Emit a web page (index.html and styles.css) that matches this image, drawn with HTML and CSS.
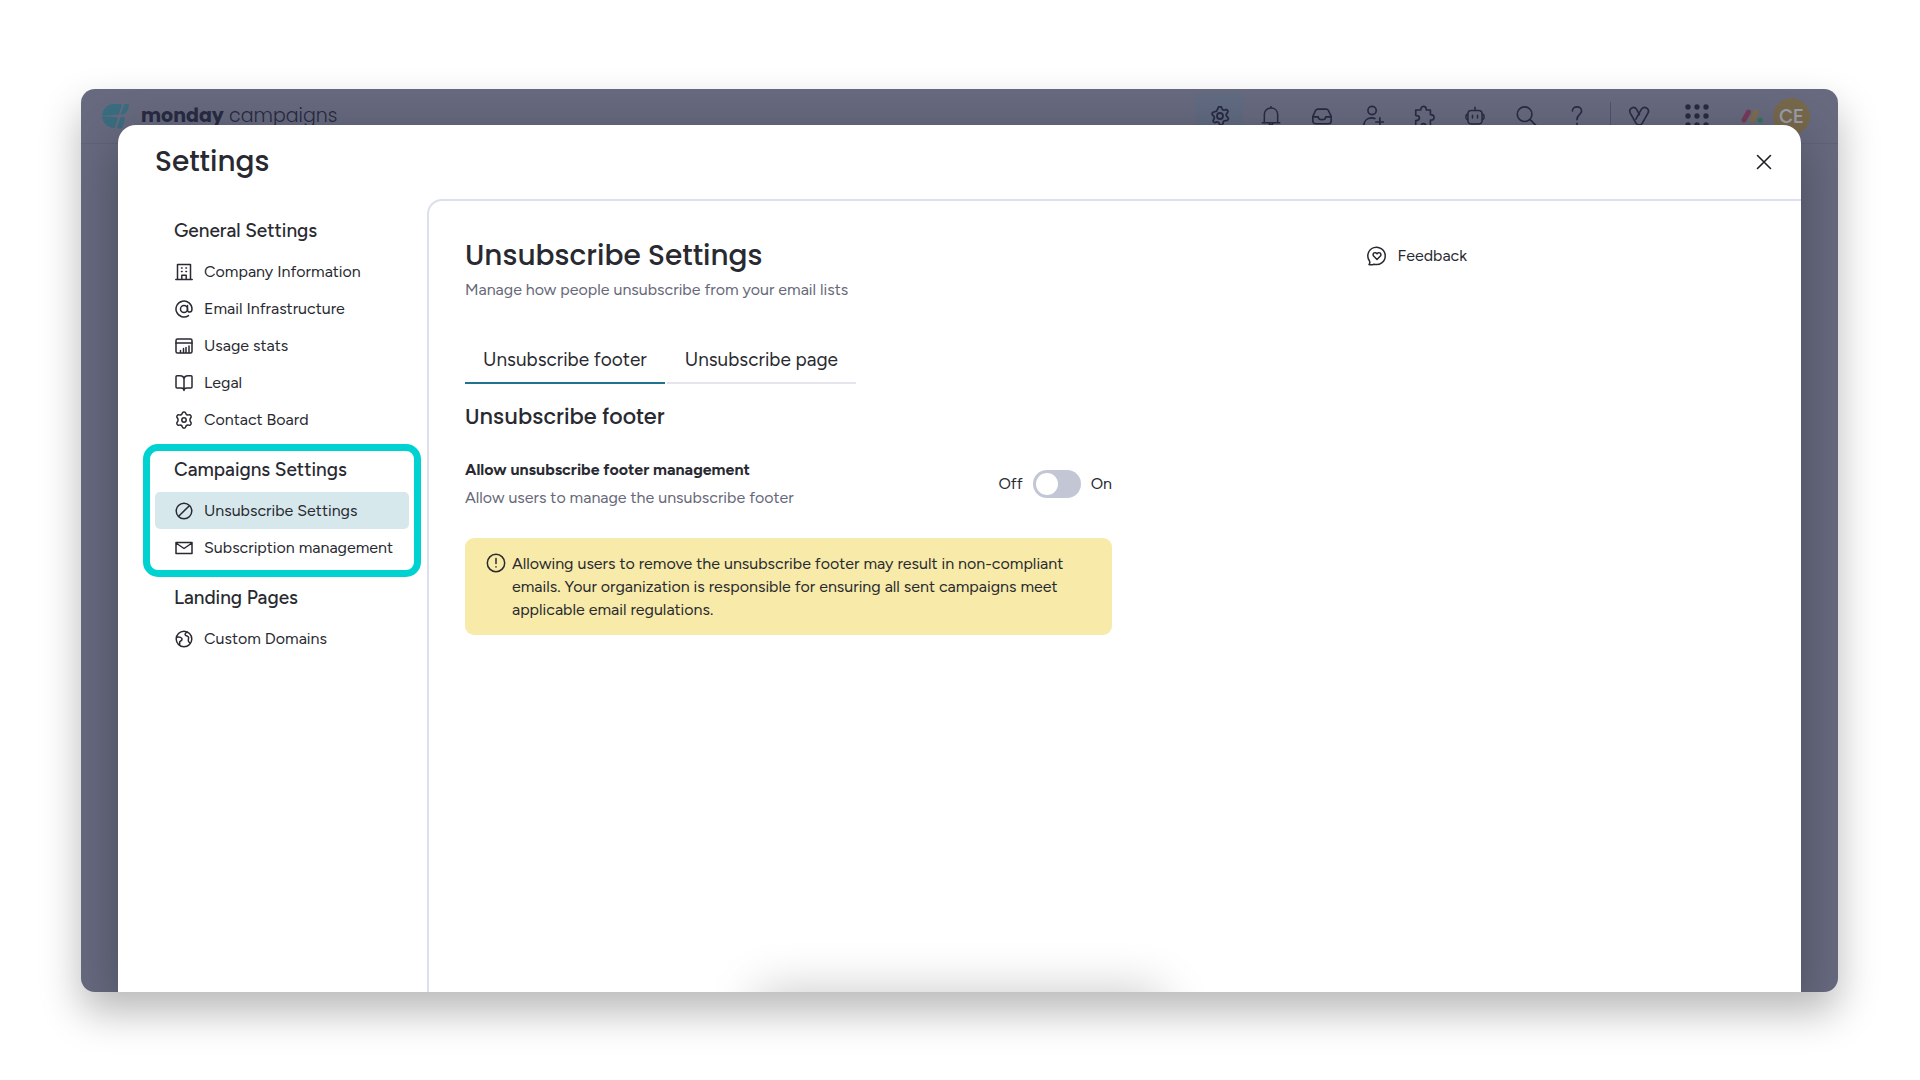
FILE: index.html
```html
<!DOCTYPE html>
<html lang="en">
<head>
    <meta charset="UTF-8">
    <meta name="viewport" content="width=device-width, initial-scale=1.0">
    <title>Settings - monday campaigns</title>
    <link rel="stylesheet" href="styles.css">
</head>
<body>
    <div class="app-window">
        <header class="topbar">
            <svg class="logo" width="27" height="25" viewBox="0 0 27 25" fill="#3a6d80">
                <path d="M0 11.500C.7 4.800 5.500 0 12 0h6.500c1 0 1.500.6 1.200 1.500l-2.500 8.200c-.2.600-.6 1-1.300 1.100L6 11.500z"/>
                <path d="M22 1c.2-.7.700-1 1.400-1h2.400c.8 0 1.200.5 1.100 1.200-.5 4.300-2.900 8.500-6.900 9.500-.7.200-1.100-.3-.9-1z"/>
                <path d="M0 12.500h6l8.500.8c1 .1 1.400.6 1.100 1.500l-2.500 8.400c-.2.600-.7.900-1.300.8C5.300 23.300.700 18.700 0 12.500z"/>
                <path d="M18 14.300c.2-.7.600-1.100 1.300-1.200 2.500-.4 4.200.3 3.500 2.600l-2.300 7.300c-.3 1-.9 1.500-1.900 1.500h-2.300c-.9 0-1.200-.6-1-1.400z"/>
            </svg>
            <span class="brand"><b>monday</b> campaigns</span>
            <nav class="tools" aria-label="Tools">
                <button class="tool active" aria-label="Settings">
                    <svg class="icon" width="20" height="20" viewBox="2 1.500 20 20"><path d="M10.300 3.300c.5-1.600 2.900-1.600 3.400 0l.3.900c.4 1.100 1.600 1.600 2.700 1.300l1-.3c1.600-.4 2.800 1.500 1.800 2.900l-.6.900a2 2 0 0 0 0 3l.9.800c1.300 1.200.3 3.300-1.500 3.300h-.9c-1.200 0-2.100.8-2.300 1.900l-.2 1c-.3 1.700-2.700 2.200-3.400.6l-.4-.9c-.5-1-1.700-1.500-2.700-1.100l-.9.300c-1.600.5-2.900-1.300-2-2.700l.5-.9c.6-1 .4-2.200-.5-3l-.7-.6c-1.300-1.100-.4-3.300 1.300-3.400l1-.1c1.100-.1 2-1 2.200-2.100z"/><circle cx="12" cy="11.500" r="3"/></svg>
                </button>
                <button class="tool" aria-label="Notifications">
                    <svg class="icon" width="20" height="20" viewBox="0 0 24 24"><path d="M12 .5v2M1.500 20h21M4 20v-9.500c0-4.500 3-8 8-8s8 3.500 8 8V20M9.500 20.500c.5 2.500 4.500 2.500 5 0"/></svg>
                </button>
                <button class="tool" aria-label="Inbox">
                    <svg class="icon" width="22" height="22" viewBox="0 0 24 24"><path d="M2 12.500 5 6a3 3 0 0 1 2.500-1.500h9A3 3 0 0 1 19 6l3 6.500v5a3 3 0 0 1-3 3H5a3 3 0 0 1-3-3zM2 13h6c0 4 8 4 8 0h6"/></svg>
                </button>
                <button class="tool" aria-label="Invite members">
                    <svg class="icon" width="22" height="22" viewBox="0 0 24 24"><circle cx="11" cy="6" r="4.500"/><path d="M12.500 23H2c0-5 3-9 8.500-9 1.500 0 2.500.3 3.500.8M19.500 14v9M15 18.500h9"/></svg>
                </button>
                <button class="tool" aria-label="Apps">
                    <svg class="icon" width="22" height="22" viewBox="0 0 24 24"><path d="M3 5.500h5.500C8.500 4 9 1.500 11.500 1.500s3 2.500 3 4H19v5c1.500 0 4 .5 4 3s-2.500 3-4 3V23H14c0-3.500-5-3.500-5 0H3v-6c3 0 4-1 4-2.800S5.500 11.500 3 11.500z"/></svg>
                </button>
                <button class="tool" aria-label="Assistant">
                    <svg class="icon" width="20" height="20" viewBox="0 0 24 24"><path d="M12 1.500v4M3 9.500c-1.500.5-2 1.500-2 3.500s.5 3 2 3.500M21 9.500c1.500.5 2 1.500 2 3.500s-.5 3-2 3.500M9 11v3.500M15 11v3.500"/><rect x="3.500" y="5.500" width="17" height="16" rx="4"/></svg>
                </button>
                <button class="tool" aria-label="Search">
                    <svg class="icon" width="22" height="22" viewBox="0 0 24 24"><circle cx="10.500" cy="10" r="8"/><path d="m16.500 16 6 6"/></svg>
                </button>
                <button class="tool" aria-label="Help">
                    <svg class="icon" width="22" height="22" viewBox="0 0 24 24"><path d="M7 6.500c0-6 10-6 10 0 0 4-5 3.500-5 9.500M12 20v1.500"/></svg>
                </button>
                <span class="divider"></span>
                <button class="tool" aria-label="Favorites">
                    <svg class="icon" width="22" height="22" viewBox="0 0 24 24"><path d="M12.500 10.500 9.600 5C7 .3 0 3.500 2.500 8.800l6 10.700c2 3.300 5.500 3.300 7.300 0l5.800-10.300C24.500 4 17.500 0 14.500 4.800L8.600 15.500"/></svg>
                </button>
            </nav>
            <button class="plain apps-grid" aria-label="Switch product">
                <svg width="24" height="24" viewBox="0 0 24 24" fill="#282b42"><circle cx="3" cy="3" r="2.700"/><circle cx="12" cy="3" r="2.700"/><circle cx="21" cy="3" r="2.700"/><circle cx="3" cy="12" r="2.700"/><circle cx="12" cy="12" r="2.700"/><circle cx="21" cy="12" r="2.700"/><circle cx="3" cy="21" r="2.700"/><circle cx="12" cy="21" r="2.700"/><circle cx="21" cy="21" r="2.700"/></svg>
            </button>
            <svg class="mark" width="22" height="14" viewBox="0 0 22 14" fill="none" stroke-width="5" stroke-linecap="round">
                <path d="m3 11 4.500-8" stroke="#773b59"/><path d="m11 11 4.500-8" stroke="#7f6d4b"/><circle cx="19.300" cy="11" r="2.600" fill="#35745a"/>
            </svg>
            <span class="avatar">CE</span>
        </header>

        <section class="modal" role="dialog" aria-labelledby="modal-title">
            <div class="modal-header">
                <h1 id="modal-title">Settings</h1>
                <button class="plain" aria-label="Close">
                    <svg width="16" height="16" viewBox="0 0 16 16" fill="none" stroke="#1f2026" stroke-width="1.600" stroke-linecap="round"><path d="m1.500 1.500 13 13M14.500 1.500l-13 13"/></svg>
                </button>
            </div>

            <nav class="sidebar" aria-label="Settings sections">
                <div class="group">
                    <h2>General Settings</h2>
                    <a href="#company">
                        <svg class="icon" width="18" height="18" viewBox="0 0 18 18"><path d="M.8 16.500h16.400M2.500 16.500V1.500h13v15M6.800 16.500v-4.300h4.400v4.300M6.500 5h.6M10.900 5h.6M6.500 8.500h.6M10.900 8.500h.6"/></svg>
                        Company Information
                    </a>
                    <a href="#email">
                        <svg class="icon" width="18" height="18" viewBox="0 0 18 18"><circle cx="9" cy="9" r="3.500"/><path d="M12.500 5.500v4.300c0 3.200 4.500 3.200 4.500-.8a8 8 0 1 0-3.500 6.600"/></svg>
                        Email Infrastructure
                    </a>
                    <a href="#usage">
                        <svg class="icon" width="18" height="18" viewBox="0 0 18 18"><rect x="1" y="2" width="16" height="14" rx="1.500"/><path d="M1 6h16M5.500 15.500v-2M8.500 15.500v-4M11 15.500v-5M14 15.500V9"/></svg>
                        Usage stats
                    </a>
                    <a href="#legal">
                        <svg class="icon" width="18" height="18" viewBox="0 0 18 18"><path d="M9 4.500C8.500 2.500 7 1.800 5 1.800H2c-.6 0-1 .4-1 1V13c0 .6.400 1 1 1h4c2 0 3 .8 3 2.500 0-1.700 1-2.500 3-2.500h4c.6 0 1-.4 1-1V2.800c0-.6-.4-1-1-1h-3c-2 0-3.500.700-4 2.700zM9 4.500v12"/></svg>
                        Legal
                    </a>
                    <a href="#contacts">
                        <svg class="icon" width="18" height="18" viewBox="0 0 18 18"><path d="M7.200 2.300c.4-1.900 3.200-1.900 3.600 0 .3 1.300 1.600 2 2.900 1.600 1.800-.6 3.300 1.700 2 3-1 1-1 3 0 4.100 1.300 1.500-.2 3.700-2 3.100-1.300-.4-2.600.3-2.900 1.600-.4 1.900-3.200 1.900-3.600 0-.3-1.300-1.600-2-2.900-1.600-1.800.6-3.300-1.600-2-3.100 1-1.100 1-3.100 0-4.100-1.300-1.300.2-3.600 2-3 1.300.400 2.600-.3 2.900-1.600z"/><circle cx="9" cy="9" r="2.200"/></svg>
                        Contact Board
                    </a>
                </div>
                <div class="group highlighted">
                    <h2>Campaigns Settings</h2>
                    <a href="#unsubscribe" class="selected" aria-current="page">
                        <svg class="icon" width="18" height="18" viewBox="0 0 18 18"><circle cx="9" cy="9" r="7.800"/><path d="M3.700 14.300 14.300 3.700"/></svg>
                        Unsubscribe Settings
                    </a>
                    <a href="#subscription">
                        <svg class="icon" width="18" height="18" viewBox="0 0 18 18"><path d="M1 3.500h16v11H1zM1 4l8 5.500L17 4"/></svg>
                        Subscription management
                    </a>
                </div>
                <div class="group">
                    <h2>Landing Pages</h2>
                    <a href="#domains">
                        <svg class="icon" width="18" height="18" viewBox="0 0 18 18"><circle cx="9" cy="9" r="7.800"/><path d="M1.500 7.200c3-.5 6 .3 5.500 2.300s-2 1-2.300 2.500c-.2 1.200.3 2.200-.2 3M12.500 2.200c-2 .3-3 1.800-2 3s2.500.3 3 2-1 3 .2 4.500l1.500 1.500"/></svg>
                        Custom Domains
                    </a>
                </div>
            </nav>

            <main class="panel">
                <div class="content">
                    <div class="title-row">
                        <div>
                            <h2 class="title">Unsubscribe Settings</h2>
                            <p class="muted">Manage how people unsubscribe from your email lists</p>
                        </div>
                        <button class="plain feedback">
                            <svg class="icon" width="20" height="20" viewBox="0 0 20 20"><path d="M2 18.500c1-1 1-2.200.5-3.500A8.700 8.700 0 1 1 7 18.200c-1.500.6-3.500.8-5 .3z"/><path d="M10 13.500 6.600 10c-1.800-2.500 1.800-4.800 3.400-2.200 1.600-2.600 5.200-.3 3.400 2.200z"/></svg>
                            Feedback
                        </button>
                    </div>

                    <div class="tabs" role="tablist">
                        <button role="tab" class="tab current" aria-selected="true">Unsubscribe footer</button>
                        <button role="tab" class="tab" aria-selected="false">Unsubscribe page</button>
                    </div>

                    <section class="setting">
                        <h3>Unsubscribe footer</h3>
                        <div class="setting-row">
                            <div>
                                <label class="setting-name" for="allow-footer">Allow unsubscribe footer management</label>
                                <p class="muted">Allow users to manage the unsubscribe footer</p>
                            </div>
                            <div class="toggle">
                                <span>Off</span>
                                <input type="checkbox" id="allow-footer" role="switch">
                                <span>On</span>
                            </div>
                        </div>
                        <div class="alert" role="note">
                            <svg class="icon" width="20" height="20" viewBox="0 0 20 20"><circle cx="10" cy="10" r="8.700"/><path d="M10 5.500v5M10 13.700v.3"/></svg>
                            <p>Allowing users to remove the unsubscribe footer may result in non-compliant emails. Your organization is responsible for ensuring all sent campaigns meet applicable email regulations.</p>
                        </div>
                    </section>
                </div>
            </main>
        </section>
    </div>
</body>
</html>
```

FILE: styles.css
```css
:root {
    --text: #292a31;
    --muted: #676879;
    --border: #dcdfec;
    --primary: #1f738d;
    --selected: #d6e8ec;
    --highlight: #00d2d2;
    --warning: #f8eaa8;
    --backdrop: #676a7f;
    --backdrop-text: #282b42;
}
* {
    box-sizing: border-box;
}
body {
    margin: 0;
    min-height: 100vh;
    padding: 89px 82px 88px 81px;
    display: flex;
    background: white;
    color: var(--text);
    font-family: Figtree, Inter, sans-serif;
    font-size: 16px;
    line-height: 24px;
}
h1, h2, h3, p {
    margin: 0;
    font-weight: 500;
}
p {
    font-weight: 400;
}
button {
    font: inherit;
    color: inherit;
    border: none;
    background: none;
    padding: 0;
    cursor: pointer;
}
svg {
    display: block;
    flex-shrink: 0;
}
.icon {
    fill: none;
    stroke: currentColor;
    stroke-width: 1.5;
    stroke-linecap: round;
    stroke-linejoin: round;
}
.plain {
    display: flex;
    align-items: center;
}
.app-window {
    position: relative;
    flex: 1;
    overflow: hidden;
    background: var(--backdrop);
    border-radius: 14px;
    box-shadow: 0 20px 40px rgba(0, 0, 0, 0.28);
}

/* top bar */
.topbar {
    display: flex;
    align-items: center;
    height: 55px;
    padding: 0 28px 0 21px;
    border-bottom: 1px solid #606377;
    color: var(--backdrop-text);
}
.topbar .icon {
    stroke-width: 1.8;
}
.brand {
    margin-left: 12px;
    font-family: Poppins, Inter, sans-serif;
    font-size: 19px;
    font-weight: 300;
}
.brand b {
    font-weight: 700;
}
.tools {
    display: flex;
    align-items: center;
    gap: 4px;
    margin-left: auto;
}
.tool {
    display: flex;
    align-items: center;
    justify-content: center;
    width: 47px;
    height: 47px;
    border-radius: 5px;
}
.tool.active {
    background: #606a80;
}
.divider {
    width: 1px;
    height: 28px;
    margin-left: 6px;
    background: #505368;
}
.apps-grid {
    margin-left: 23px;
}
.mark {
    margin: 0 10px 0 32px;
}
.avatar {
    width: 37px;
    height: 37px;
    border-radius: 50%;
    background: #76684b;
    color: #9a9caa;
    font-size: 19px;
    font-weight: 600;
    line-height: 37px;
    text-align: center;
}

/* settings modal */
.modal {
    position: absolute;
    inset: 36px 37px 0;
    display: grid;
    grid-template-columns: 309px 1fr;
    grid-template-rows: 74px 1fr;
    background: white;
    border-radius: 18px 18px 0 0;
    box-shadow: 0 15px 50px rgba(0, 0, 0, 0.3);
}
.modal::after {
    content: "";
    position: absolute;
    top: 100%;
    left: 38%;
    right: 38%;
    height: 60px;
    box-shadow: 0 0 50px rgba(0, 0, 0, 0.22);
}
.modal-header {
    grid-column: 1 / -1;
    display: flex;
    align-items: center;
    justify-content: space-between;
    padding: 0 29px 0 37px;
}
.modal-header h1, .title {
    font-family: Poppins, Inter, sans-serif;
    font-size: 28px;
    line-height: 36px;
}
.sidebar {
    padding: 0 18px 0 37px;
}
.group {
    position: relative;
    padding-top: 10px;
}
.group h2 {
    padding-left: 19px;
    font-size: 19px;
    line-height: 44px;
}
.group a {
    display: flex;
    align-items: center;
    gap: 11px;
    height: 37px;
    padding-left: 20px;
    border-radius: 5px;
    color: inherit;
    text-decoration: none;
    white-space: nowrap;
}
.group a.selected {
    background: var(--selected);
}
.highlighted::after {
    content: "";
    position: absolute;
    inset: 6px -12px -11px;
    border: 7px solid var(--highlight);
    border-radius: 15px;
    pointer-events: none;
}
.panel {
    padding: 37px 37px 37px 36px;
    border: 2px solid var(--border);
    border-width: 2px 0 0 2px;
    border-top-left-radius: 15px;
}
.content {
    max-width: 1002px;
}
.title-row {
    display: flex;
    justify-content: space-between;
    align-items: flex-start;
}
.muted {
    color: var(--muted);
}
.title-row .muted {
    margin-top: 4px;
}
.feedback {
    gap: 11px;
    height: 36px;
}
.tabs {
    display: flex;
    gap: 2px;
    margin-top: 35px;
}
.tab {
    height: 47px;
    padding: 0 18px;
    border-bottom: 2px solid #e4e5ed;
    font-size: 19px;
}
.tab.current {
    border-color: var(--primary);
}
.setting {
    max-width: 647px;
}
.setting h3 {
    margin-top: 21px;
    font-family: Poppins, Inter, sans-serif;
    font-size: 21px;
    line-height: 24px;
}
.setting-row {
    display: flex;
    justify-content: space-between;
    align-items: center;
    margin-top: 29px;
}
.setting-name {
    font-weight: 700;
}
.setting-row .muted {
    margin-top: 4px;
}
.toggle {
    display: flex;
    align-items: center;
    gap: 10px;
}
.toggle input {
    appearance: none;
    width: 48px;
    height: 28px;
    margin: 0;
    padding: 3px;
    border-radius: 14px;
    background: #c3c6d4;
    cursor: pointer;
}
.toggle input::before {
    content: "";
    display: block;
    width: 22px;
    height: 22px;
    border-radius: 50%;
    background: white;
}
.toggle input:checked {
    background: var(--primary);
}
.toggle input:checked::before {
    margin-left: auto;
}
.alert {
    display: flex;
    gap: 6px;
    margin-top: 28px;
    padding: 14px 21px;
    border-radius: 9px;
    background: var(--warning);
    line-height: 23px;
}
.alert svg {
    margin-top: 1px;
}
```
